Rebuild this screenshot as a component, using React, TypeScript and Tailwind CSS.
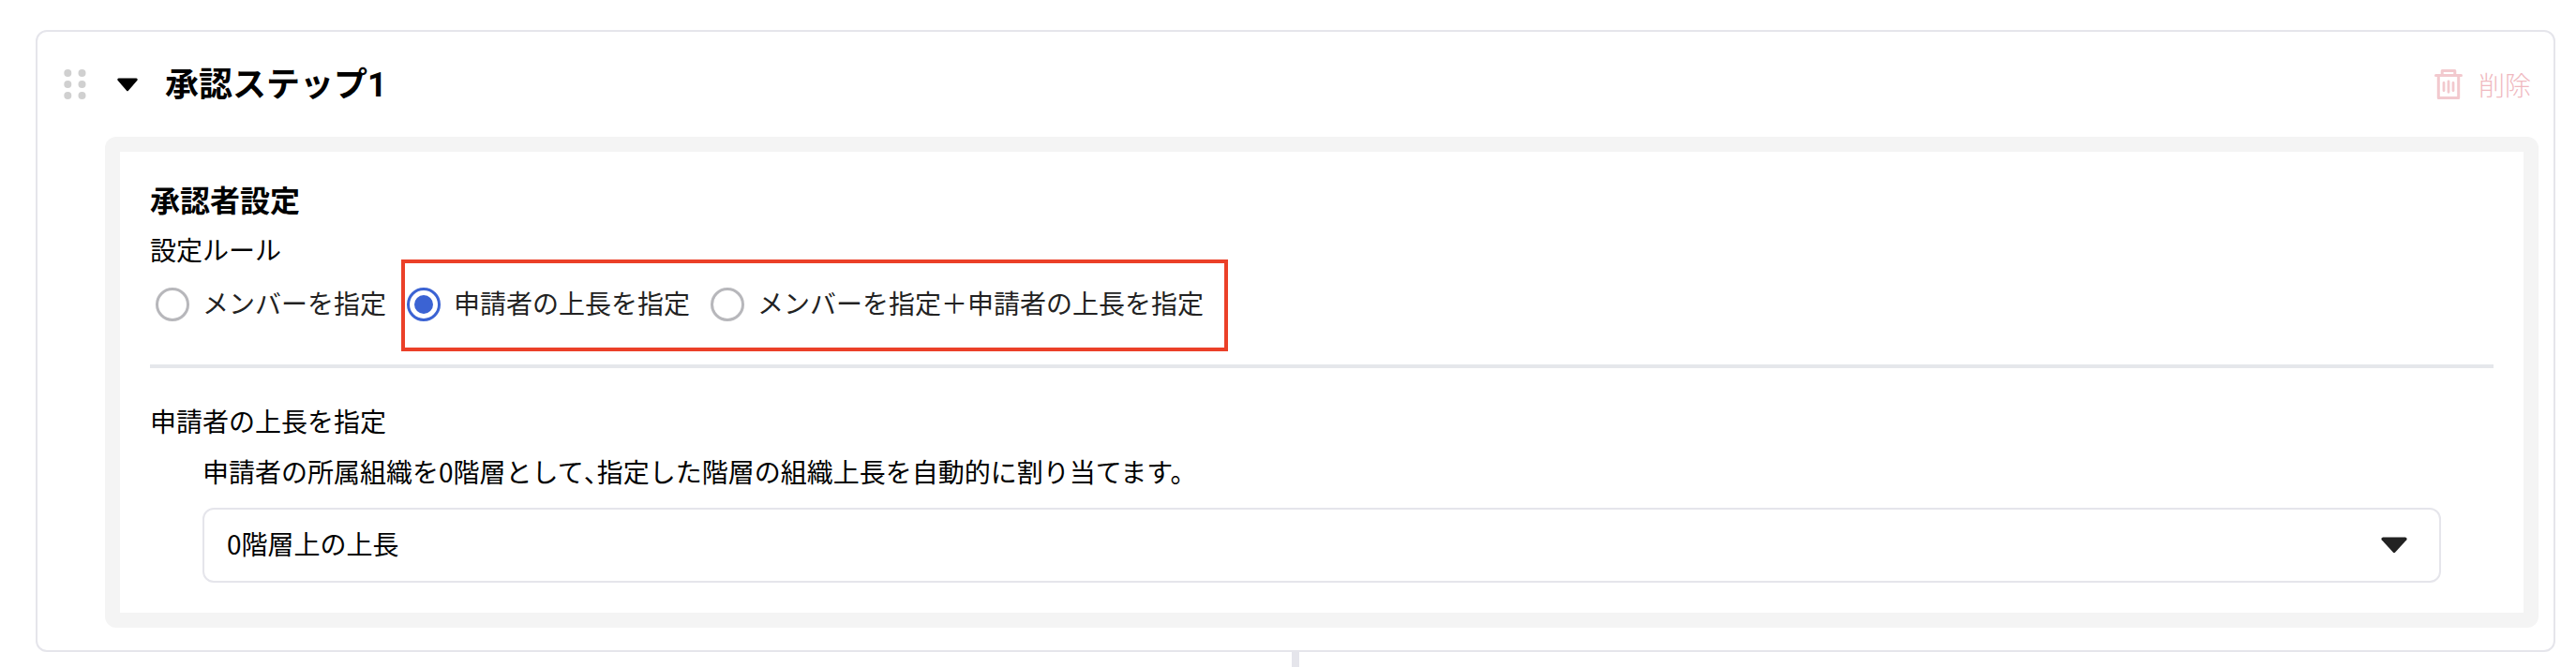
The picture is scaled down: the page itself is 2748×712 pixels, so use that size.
import React from "react";

function DragHandle() {
  return (
    <svg width="24" height="32" viewBox="0 0 24 32" className="fill-[#d0d0d0]" aria-hidden="true">
      {[4, 16, 28].map((y) => (
        <React.Fragment key={y}>
          <circle cx="4.3" cy={y} r="4" />
          <circle cx="19.5" cy={y} r="4" />
        </React.Fragment>
      ))}
    </svg>
  );
}

function Caret({ className }: { className: string }) {
  return (
    <svg viewBox="0 0 28 18" preserveAspectRatio="none" className={className} aria-hidden="true">
      <path d="M2 .5H26Q28.4 1.2 27.3 3.2L15.2 16.6Q14 17.8 12.8 16.6L.7 3.2Q-.4 1.2 2 .5Z" />
    </svg>
  );
}

function TrashIcon() {
  return (
    <svg width="30" height="32" viewBox="0 0 30 32" fill="none" className="stroke-[#f2c9ce]" aria-hidden="true">
      <path d="M1.5 6.5H28.5" strokeWidth="3" strokeLinecap="round" />
      <path d="M8.2 6V1.5H21.8V6" strokeWidth="3" strokeLinejoin="round" />
      <path d="M4.3 7V30.5H25.7V7" strokeWidth="3" strokeLinejoin="round" />
      <path d="M10 14.3V22.7M15 13V24.3M20 14.3V22.7" strokeWidth="2.8" strokeLinecap="round" />
    </svg>
  );
}

function Radio({ label, checked = false }: { label: string; checked?: boolean }) {
  return (
    <label className="flex h-10 items-center gap-3.5">
      <span
        className={
          checked
            ? "flex size-9 items-center justify-center rounded-full border-3 border-[#3b63d3]"
            : "flex size-9 items-center justify-center rounded-full border-3 border-[#b7b7bb]"
        }
      >
        {checked && <span className="size-5 rounded-full bg-[#3b63d3]" />}
      </span>
      <span className="pb-1 text-[#222222]">{label}</span>
    </label>
  );
}

export default function App() {
  return (
    <main
      lang="ja"
      className="flex h-[712px] w-[2748px] flex-col overflow-hidden bg-white pt-8 pr-[22px] pl-[38px] font-['Noto_Sans_CJK_JP',sans-serif] text-[28px] leading-10 whitespace-nowrap text-black"
    >
      <section className="h-[664px] shrink-0 rounded-xl border-2 border-[#e5e5eb] pr-4 pl-[72px]">
        <header className="-ml-[44px] flex h-28 items-center pr-2">
          <DragHandle />
          <Caret className="ml-[33px] h-[15px] w-[22px] fill-black" />
          <h2 className="ml-[29px] pt-0.5 font-['Roboto','Noto_Sans_CJK_JP',sans-serif] text-[36px] font-bold">
            承認ステップ1
          </h2>
          <button className="ml-auto flex items-center gap-[17px] font-light text-[#f0b9c0]">
            <TrashIcon />
            <span>削除</span>
          </button>
        </header>

        <div className="h-[524px] rounded-xl border-16 border-[#f4f4f4] bg-[#f4f4f4]">
          <div className="h-full bg-white px-8 pt-[30px]">
            <h3 className="h-[54px] text-[32px] font-bold">承認者設定</h3>
            <p className="h-[59px]">設定ルール</p>
            <div className="relative flex items-center pl-1.5">
              <Radio label="メンバーを指定" />
              <div className="ml-[22px]">
                <Radio label="申請者の上長を指定" checked />
              </div>
              <div className="ml-[22px]">
                <Radio label="メンバーを指定＋申請者の上長を指定" />
              </div>
              <div className="pointer-events-none absolute -top-[28px] left-[268px] h-[98px] w-[882px] border-4 border-[#eb4028]" />
            </div>
            <hr className="mt-11 border-t-4 border-[#e5e7eb]" />
            <p className="mt-9">申請者の上長を指定</p>
            <div className="pr-14 pl-14">
              <p className="mt-3.5">
                申請者の所属組織を0階層として<span className="[font-feature-settings:'halt']">、</span>指定した階層の組織上長を自動的に割り当てます。
              </p>
              <div className="mt-[19px] flex h-20 items-center justify-between rounded-xl border-2 border-[#e5e5eb] pr-[34px] pl-6">
                <span className="pb-1">0階層上の上長</span>
                <Caret className="h-[18px] w-7 fill-[#222222]" />
              </div>
            </div>
          </div>
        </div>
      </section>
      <div className="ml-[1340px] h-4 w-2 shrink-0 bg-[#e5e5eb]" />
    </main>
  );
}
